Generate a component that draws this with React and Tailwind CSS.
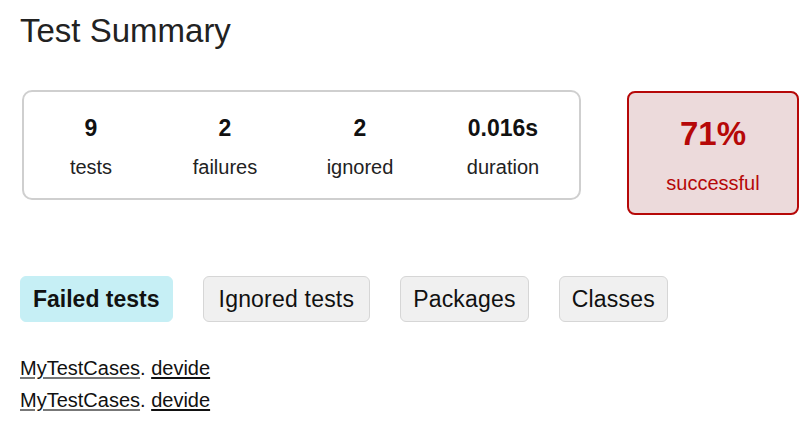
import React from 'react';

const stats = [
  { value: '9', label: 'tests', cls: 'ml-[12px]' },
  { value: '2', label: 'failures', cls: 'ml-[24px]' },
  { value: '2', label: 'ignored', cls: 'ml-[25px]' },
  { value: '0.016s', label: 'duration', cls: 'ml-[33px]' },
];

const tabs = [
  { name: 'Failed tests', cls: 'px-[12px] border-[#c6eff5] bg-[#c6eff5] font-bold' },
  { name: 'Ignored tests', cls: 'px-[15px] border-[#d6d6d6] bg-[#f0f0f0] tracking-[0.2px]' },
  { name: 'Packages', cls: 'px-[12px] border-[#d6d6d6] bg-[#f0f0f0] tracking-[0.2px]' },
  { name: 'Classes', cls: 'px-[12px] border-[#d6d6d6] bg-[#f0f0f0] tracking-[0.2px]' },
];

const App = () => {
  return (
    <div className="min-h-screen bg-white px-[20px] pt-[12px] text-[#111] font-['Liberation_Sans',Arial,sans-serif]">
      <h1 className="text-[33px] leading-[38px] text-[#222] font-normal">Test Summary</h1>

      <div className="mt-[40px] flex items-start">
        <div className="shrink-0 ml-[2px] w-[559px] h-[110px] rounded-[10px] border-2 border-[#cfcfcf] flex pt-[22px]">
          {stats.map((s) => (
            <div key={s.label} className={`shrink-0 w-[110px] flex flex-col items-center ${s.cls}`}>
              <div className="text-[23px] leading-[28px] font-bold text-[#111]">{s.value}</div>
              <div className="mt-[12px] text-[20px] leading-[26px] text-[#222]">{s.label}</div>
            </div>
          ))}
        </div>

        <div className="shrink-0 ml-[46px] mt-px w-[172px] h-[124px] rounded-[8px] border-2 border-[#b60808] bg-[#ecdadb] flex flex-col items-center pt-[21px]">
          <div className="text-[33px] leading-[40px] font-bold text-[#b60808]">71%</div>
          <div className="mt-[16px] text-[20px] leading-[26px] text-[#b60808]">successful</div>
        </div>
      </div>

      <div className="mt-[61px] flex gap-[30px]">
        {tabs.map((t) => (
          <div
            key={t.name}
            className={`shrink-0 h-[46px] py-[7px] rounded-[6px] border text-[23px] leading-[30px] text-[#111] ${t.cls}`}
          >
            {t.name}
          </div>
        ))}
      </div>

      <div className="mt-[30px] text-[20px] leading-[32px] text-[#111]">
        {[0, 1].map((i) => (
          <div key={i}>
            <a href="#" className="underline decoration-[#777] underline-offset-2">MyTestCases</a>
            <span>. </span>
            <a href="#" className="underline underline-offset-2">devide</a>
          </div>
        ))}
      </div>
    </div>
  );
};

export default App;
